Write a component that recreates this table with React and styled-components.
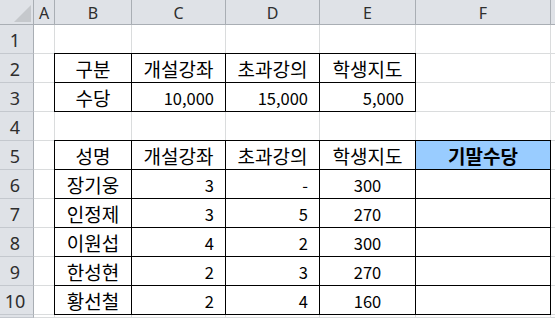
import React from "react";
import styled, { createGlobalStyle } from "styled-components";

const GlobalStyle = createGlobalStyle`
  html, body {
    margin: 0;
    padding: 0;
    background: #fff;
  }
  body {
    font-family: "Noto Sans CJK KR", "Noto Sans", sans-serif;
  }
`;

const GRID = "#dadcdd";
const HEAD_BG = "#dfe2e7";
const HEAD_LINE = "#c4c8ce";
const HEAD_EDGE = "#a9aeb4";

const Sheet = styled.div`
  display: grid;
  grid-template-columns: 34px 21px 77px 94px 94px 96px 135px 1fr;
  grid-template-rows: 25px repeat(10, 29px) 1fr;
  width: 555px;
  height: 318px;
  overflow: hidden;
  background: #fff;
`;

const Corner = styled.div`
  box-sizing: border-box;
  background: ${HEAD_BG};
  border-right: 1px solid ${HEAD_EDGE};
  border-bottom: 1px solid ${HEAD_EDGE};
  display: flex;
  align-items: flex-end;
  justify-content: flex-end;
  padding: 0 2px 2px 0;
`;

const ColHead = styled.div`
  box-sizing: border-box;
  background: ${HEAD_BG};
  border-right: 1px solid ${p => (p.$last ? HEAD_LINE : HEAD_EDGE)};
  border-bottom: 1px solid ${HEAD_EDGE};
  display: flex;
  align-items: center;
  justify-content: center;
  font-family: "Noto Sans", sans-serif;
  font-size: 16px;
  color: #2e2e2e;
  padding-top: 1px;
`;

const RowHead = styled.div`
  box-sizing: border-box;
  background: ${HEAD_BG};
  border-right: 1px solid ${HEAD_EDGE};
  border-bottom: 1px solid ${HEAD_LINE};
  display: flex;
  align-items: center;
  justify-content: center;
  font-family: "Noto Sans", sans-serif;
  font-size: 18px;
  color: #2e2e2e;
  padding: 1px 3px 0 0;
`;

const Cell = styled.div`
  box-sizing: border-box;
  min-width: 0;
  border-right: 1px solid ${p => (p.$edgeR ? "#000" : GRID)};
  border-bottom: 1px solid ${p => (p.$edgeB ? "#000" : GRID)};
  background: ${p => p.$fill || "#fff"};
  box-shadow: ${p => p.$shadow || "none"};
  display: flex;
  align-items: center;
  justify-content: ${p =>
    p.$align === "right" ? "flex-end" : p.$align === "center" ? "center" : "flex-start"};
  padding: 1px 11px 0 4px;
  ${p => p.$align === "center" && `padding-left: 0; padding-right: 0;`}
  font-size: ${p => (p.$num ? "16.5px" : "19px")};
  font-weight: ${p => (p.$bold ? 700 : 400)};
  color: #000;
  white-space: nowrap;
  overflow: visible;
`;

const cols = ["A", "B", "C", "D", "E", "F", ""];

const C = (text) => ({ text, align: "center", num: /^[\d,-]+$/.test(text) });
const R = (text) => ({ text, align: "right", num: true });

const data = {
  2: [null, C("구분"), C("개설강좌"), C("초과강의"), C("학생지도")],
  3: [null, C("수당"), R("10,000"), R("15,000"), R("5,000")],
  5: [null, C("성명"), C("개설강좌"), C("초과강의"), C("학생지도"),
    { text: "기말수당", align: "center", bold: true, fill: "#99ccff" }],
  6: [null, C("장기웅"), R("3"), R("-"), C("300")],
  7: [null, C("인정제"), R("3"), R("5"), C("270")],
  8: [null, C("이원섭"), R("4"), R("2"), C("300")],
  9: [null, C("한성현"), R("2"), R("3"), C("270")],
  10: [null, C("황선철"), R("2"), R("4"), C("160")],
};

const tables = [
  { r1: 2, r2: 3, c1: 1, c2: 4 },
  { r1: 5, r2: 10, c1: 1, c2: 5 },
];

function edgeFor(r, c) {
  const t = tables.find(t => r >= t.r1 && r <= t.r2 && c >= t.c1 && c <= t.c2);
  if (!t) return {};
  const shadows = [];
  if (r === t.r1) shadows.push("0 -1px 0 #000");
  if (c === t.c1) shadows.push("-1px 0 0 #000");
  if (r === t.r1 && c === t.c1) shadows.push("-1px -1px 0 #000");
  return { edgeR: true, edgeB: true, shadow: shadows.join(", ") };
}

const CornerMark = () => (
  <svg width="17" height="17" viewBox="0 0 17 17">
    <polygon points="17,0 17,17 0,17" fill="#c5c8cc" />
  </svg>
);

export default function App() {
  const rows = Array.from({ length: 11 }, (_, i) => i + 1);
  return (
    <>
      <GlobalStyle />
      <Sheet>
        <Corner><CornerMark /></Corner>
        {cols.map((c, i) => (
          <ColHead key={i} $last={i === cols.length - 1}>{c}</ColHead>
        ))}
        {rows.map(r => (
          <React.Fragment key={r}>
            {/* row 11 only peeks in at the bottom edge, its number is out of view */}
            <RowHead>{r < 11 ? r : ""}</RowHead>
            {cols.map((_, c) => {
              const cell = (data[r] && data[r][c]) || {};
              const e = edgeFor(r, c);
              return (
                <Cell
                  key={c}
                  $align={cell.align}
                  $bold={cell.bold}
                  $fill={cell.fill}
                  $num={cell.num}
                  $edgeR={e.edgeR}
                  $edgeB={e.edgeB}
                  $shadow={e.shadow}
                >
                  {cell.text}
                </Cell>
              );
            })}
          </React.Fragment>
        ))}
      </Sheet>
    </>
  );
}
